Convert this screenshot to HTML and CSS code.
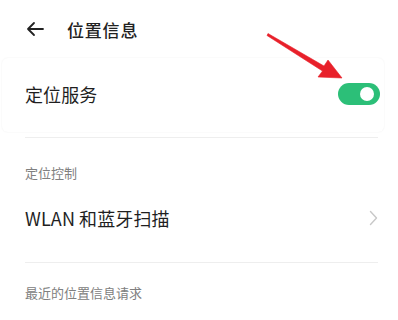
FILE: index.html
```html
<!DOCTYPE html>
<html lang="zh">
<head>
<meta charset="utf-8">
<link rel="stylesheet" href="styles.css">
</head>
<body>
<div class="page">
  <header class="topbar">
    <svg class="back" width="20" height="16" viewBox="0 0 20 16"><path d="M18 8H3M9 2L3 8l6 6" fill="none" stroke="#222" stroke-width="1.8" stroke-linecap="round" stroke-linejoin="round"/></svg>
    <h1 class="title">位置信息</h1>
  </header>
  <section class="card">
    <div class="row">
      <span class="label">定位服务</span>
      <span class="switch"><span class="knob"></span></span>
    </div>
  </section>
  <div class="divider first"></div>
  <div class="caption">定位控制</div>
  <div class="row link">
    <span class="label">WLAN 和蓝牙扫描</span>
    <svg class="chev" width="9" height="16" viewBox="0 0 9 16"><path d="M1.5 1.5L7.5 8l-6 6.5" fill="none" stroke="#c8c8c8" stroke-width="1.4" stroke-linecap="round" stroke-linejoin="round"/></svg>
  </div>
  <div class="divider"></div>
  <div class="caption last">最近的位置信息请求</div>
  <svg class="arrow" width="90" height="70" viewBox="0 0 90 70"><path d="M8 8.5 L64 41 L68 35 L82 53 L58 52 L62.5 46 L7 10.5 Z" fill="#e8202a" stroke="#e8202a" stroke-width="0.6" stroke-linejoin="round"/></svg>
</div>
</body>
</html>
```

FILE: styles.css
```css
* { box-sizing: border-box; }
html, body { margin: 0; padding: 0; background: #fff; }
body { font-family: "Noto Sans CJK SC", "Noto Sans", sans-serif; color: #1e1e1e; }
.page { position: relative; width: 398px; height: 320px; overflow: hidden; padding: 0 20px 0 25px; }
.topbar { display: flex; align-items: center; height: 58px; padding-bottom: 0; }
.back { margin-right: 22px; }
.title { margin: 0; font-size: 17px; font-weight: 500; letter-spacing: 0.8px; color: #222; }
.card { margin: 0 -6px 0 -23px; padding: 0 6px 0 23px; border-radius: 6px; box-shadow: 0 0 2px rgba(0,0,0,0.07); }
.row { display: flex; align-items: center; justify-content: space-between; height: 74px; padding-bottom: 2px; }
.label { font-size: 18px; letter-spacing: 0.1px; color: #1f1f1f; }
.switch { display: flex; align-items: center; justify-content: flex-end; width: 42px; height: 22px; border-radius: 11px; background: #2cbf78; padding-right: 6px; margin-right: -2px; }
.knob { width: 14px; height: 14px; border-radius: 50%; background: #fff; }
.divider { height: 1px; background: #eeeeee; }
.divider.first { margin-top: 5px; }
.caption { font-size: 13px; color: #808080; padding-top: 25px; height: 40px; }
.caption.last { padding-top: 20px; }
.link { height: 84px; padding-bottom: 4px; }
.chev { margin-right: 0; }
.arrow { position: absolute; left: 260px; top: 25px; }
```
